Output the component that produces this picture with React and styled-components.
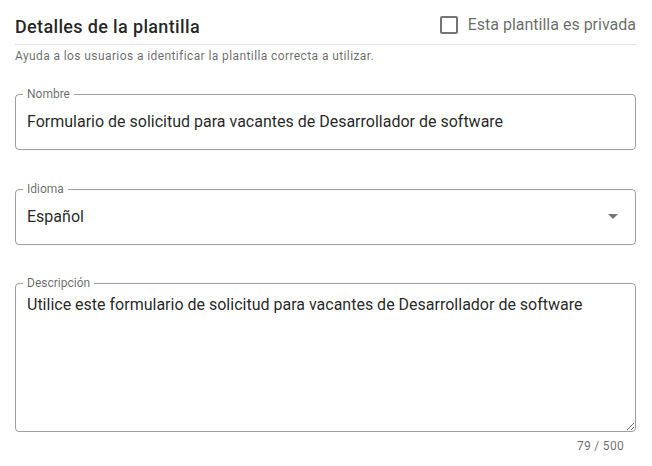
import React from "react";
import styled, { createGlobalStyle } from "styled-components";

const GlobalStyle = createGlobalStyle`
  body {
    margin: 0;
    background: #fff;
    font-family: Roboto, "Liberation Sans", Arial, sans-serif;
    color: rgba(0, 0, 0, 0.87);
  }
`;

const Page = styled.div`
  padding: 0 16px 0 15px;
`;

const HeaderRow = styled.div`
  display: flex;
  justify-content: space-between;
  align-items: flex-start;
  height: 44px;
  border-bottom: 1px solid #e0e0e0;
`;

const Title = styled.h2`
  margin: 15px 0 0;
  font-size: 18px;
  line-height: 24px;
  font-weight: 500;
  letter-spacing: 0.35px;
  color: rgba(0, 0, 0, 0.87);
`;

const CheckLabel = styled.label`
  display: flex;
  align-items: center;
  gap: 7px;
  margin-top: 13px;
  font-size: 16px;
  line-height: 24px;
  color: rgba(0, 0, 0, 0.6);
  cursor: pointer;
`;

const Subtitle = styled.p`
  margin: 3px 0 0;
  font-size: 12px;
  line-height: 16px;
  letter-spacing: 0.4px;
  color: rgba(0, 0, 0, 0.6);
`;

const Field = styled.fieldset`
  margin: ${(p) => p.$top}px 0 0;
  padding: 0;
  border: 1px solid rgba(0, 0, 0, 0.38);
  border-radius: 4px;
  min-width: 0;
`;

const Legend = styled.legend`
  margin-left: 7px;
  padding: 0 4px;
  font-size: 12px;
  line-height: 12px;
  color: rgba(0, 0, 0, 0.6);
`;

const Input = styled.input`
  display: block;
  box-sizing: border-box;
  width: 100%;
  height: 44px;
  margin: 0 0 5px;
  padding: 0 11px 2px;
  border: 0;
  outline: none;
  background: transparent;
  font: inherit;
  font-size: 16px;
  color: rgba(0, 0, 0, 0.87);
`;

const SelectBox = styled.div`
  display: flex;
  align-items: center;
  justify-content: space-between;
  height: 42px;
  margin-bottom: 5px;
  padding: 0 10px 2px 11px;
  font-size: 16px;
  cursor: pointer;
`;

const TextArea = styled.textarea`
  display: block;
  box-sizing: border-box;
  width: 100%;
  height: 142px;
  margin: 0;
  padding: 4px 11px;
  border: 0;
  outline: none;
  resize: vertical;
  background: transparent;
  font: inherit;
  font-size: 16px;
  line-height: 24px;
  color: rgba(0, 0, 0, 0.87);
`;

const Counter = styled.div`
  text-align: right;
  padding: 6px 12px 0 0;
  font-size: 12px;
  line-height: 16px;
  letter-spacing: 0.3px;
  color: rgba(0, 0, 0, 0.6);
`;

const CheckIcon = () => (
  <svg width="24" height="24" viewBox="0 0 24 24" fill="rgba(0,0,0,0.54)">
    <path d="M19 5v14H5V5h14m0-2H5c-1.1 0-2 .9-2 2v14c0 1.1.9 2 2 2h14c1.1 0 2-.9 2-2V5c0-1.1-.9-2-2-2z" />
  </svg>
);

const ArrowIcon = () => (
  <svg width="24" height="24" viewBox="0 0 24 24" fill="rgba(0,0,0,0.54)">
    <path d="M7 10l5 5 5-5z" />
  </svg>
);

export default function App() {
  return (
    <Page>
      <GlobalStyle />
      <HeaderRow>
        <Title>Detalles de la plantilla</Title>
        <CheckLabel>
          <CheckIcon />
          Esta plantilla es privada
        </CheckLabel>
      </HeaderRow>
      <Subtitle>
        Ayuda a los usuarios a identificar la plantilla correcta a utilizar.
      </Subtitle>

      <Field $top={24}>
        <Legend>Nombre</Legend>
        <Input
          defaultValue="Formulario de solicitud para vacantes de Desarrollador de software"
        />
      </Field>

      <Field $top={33}>
        <Legend>Idioma</Legend>
        <SelectBox>
          <span>Español</span>
          <ArrowIcon />
        </SelectBox>
      </Field>

      <Field $top={32}>
        <Legend>Descripción</Legend>
        <TextArea defaultValue="Utilice este formulario de solicitud para vacantes de Desarrollador de software" />
      </Field>
      <Counter>79 / 500</Counter>
    </Page>
  );
}
